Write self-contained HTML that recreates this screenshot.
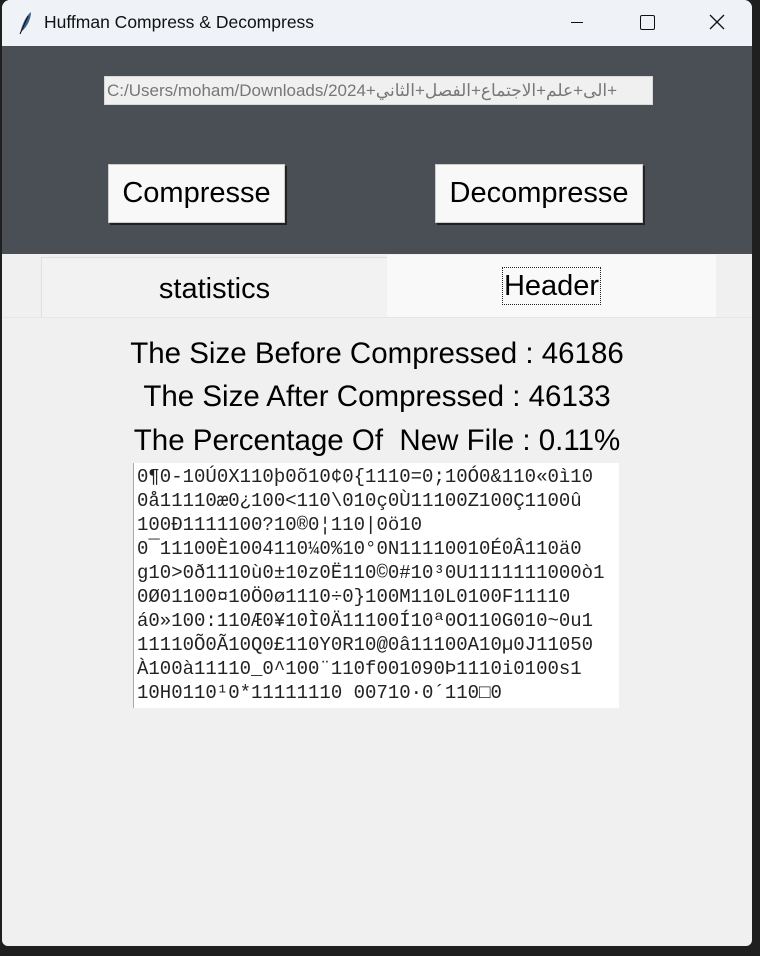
<!DOCTYPE html>
<html><head><meta charset="utf-8"><style>
body{margin:0;width:760px;height:956px;background:#1f1f1f;position:relative;overflow:hidden;font-family:"Liberation Sans",Arial,sans-serif}
.win{position:absolute;left:2px;top:0;width:750px;height:946px;background:#f0f0f0;border-radius:8px 8px 6px 6px;overflow:hidden}
.title{position:absolute;left:0;top:0;width:750px;height:46px;background:#eff3f7}
.title span{position:absolute;left:42px;top:12px;font-size:17.5px;color:#111}
.dark{position:absolute;left:0;top:46px;width:750px;height:208px;background:#4a4f55}
.entry{position:absolute;left:102px;top:30px;width:545px;height:27px;background:#f0f0f0;border:1px solid #d8d8d8;font-size:17px;color:#777;line-height:27px;overflow:hidden;white-space:nowrap;padding-left:2px;font-family:"Liberation Sans","Noto Sans CJK SC",sans-serif}
.btn{position:absolute;top:118px;height:57px;background:#f8f8f9;border:1px solid #ccc;box-shadow:2px 2px 0 #222;font-size:29px;text-align:center;line-height:57px;color:#000}
.tab{position:absolute;font-size:29px;text-align:center;color:#000}
.lbl{position:absolute;left:0;width:750px;text-align:center;font-size:29.5px;color:#000}
.txt{position:absolute;left:131px;top:463px;width:486px;height:245px;background:#fff;border-left:1px solid #aaa;font-family:"Liberation Mono","Courier New",monospace;font-size:19px;line-height:24px;color:#222;padding:2px 0 0 3px;box-sizing:border-box;white-space:pre;overflow:hidden}
</style></head><body>
<div class="win">
<div class="title">
<svg style="position:absolute;left:14px;top:10px" width="18" height="26" viewBox="0 0 18 26"><path d="M4 24 C6 14 10 6 15 2 C15 9 11 17 6 21 Z" fill="#3a5f8a"/><path d="M4 24 L12 6" stroke="#111" stroke-width="1"/></svg>
<span>Huffman Compress &amp; Decompress</span>
<div style="position:absolute;left:569px;top:22px;width:12px;height:1px;background:#111"></div>
<div style="position:absolute;left:638px;top:15px;width:13px;height:13px;border:1.5px solid #111;border-radius:2px"></div>
<svg style="position:absolute;left:707px;top:14px" width="16" height="16"><path d="M1 1L15 15M15 1L1 15" stroke="#111" stroke-width="1.3"/></svg>
</div>
<div class="dark">
<div class="entry">C:/Users/moham/Downloads/2024+الى+علم+الاجتماع+الفصل+الثاني+</div>
<div class="btn" style="left:106px;width:175px">Compresse</div>
<div class="btn" style="left:433px;width:206px">Decompresse</div>
</div>
<div class="tab" style="left:39px;top:257px;width:345px;height:59px;line-height:62px;background:#f2f2f2;border:1px solid #e0e0e0">statistics</div>
<div class="tab" style="left:385px;top:255px;width:329px;height:62px;line-height:62px;background:#f9f9f9"><span style="border:1px dotted #222;padding:0 1px;line-height:36px;display:inline-block">Header</span></div>
<div style="position:absolute;left:0;top:317px;width:750px;height:1px;background:#e6e6e6"></div>
<div class="lbl" style="top:337px">The Size Before Compressed : 46186</div>
<div class="lbl" style="top:380px">The Size After Compressed : 46133</div>
<div class="lbl" style="top:424px">The Percentage Of&nbsp; New File : 0.11%</div>
<div class="txt">0¶0-10Ú0X110þ0õ10¢0{1110=0;10Ó0&amp;110«0ì10
0å11110æ0¿100&lt;110\010ç0Ù11100Z100Ç1100û
100Ð1111100?10®0¦110|0ö10
0¯11100È1004110¼0%10°0N11110010É0Â110ä0
g10&gt;0ð1110ù0±10z0Ë110©0#10³0U1111111000ò1
0Ø01100¤10Ö0ø1110÷0}100M110L0100F11110
á0»100:110Æ0¥10Ì0Ä11100Í10ª0O110G010~0u1
11110Õ0Ã10Q0£110Y0R10@0â11100A10µ0J11050
À100à11110_0^100¨110f001090Þ1110i0100s1
10H0110¹0*11111110 00710·0´110□0</div>
</div>
</body></html>
